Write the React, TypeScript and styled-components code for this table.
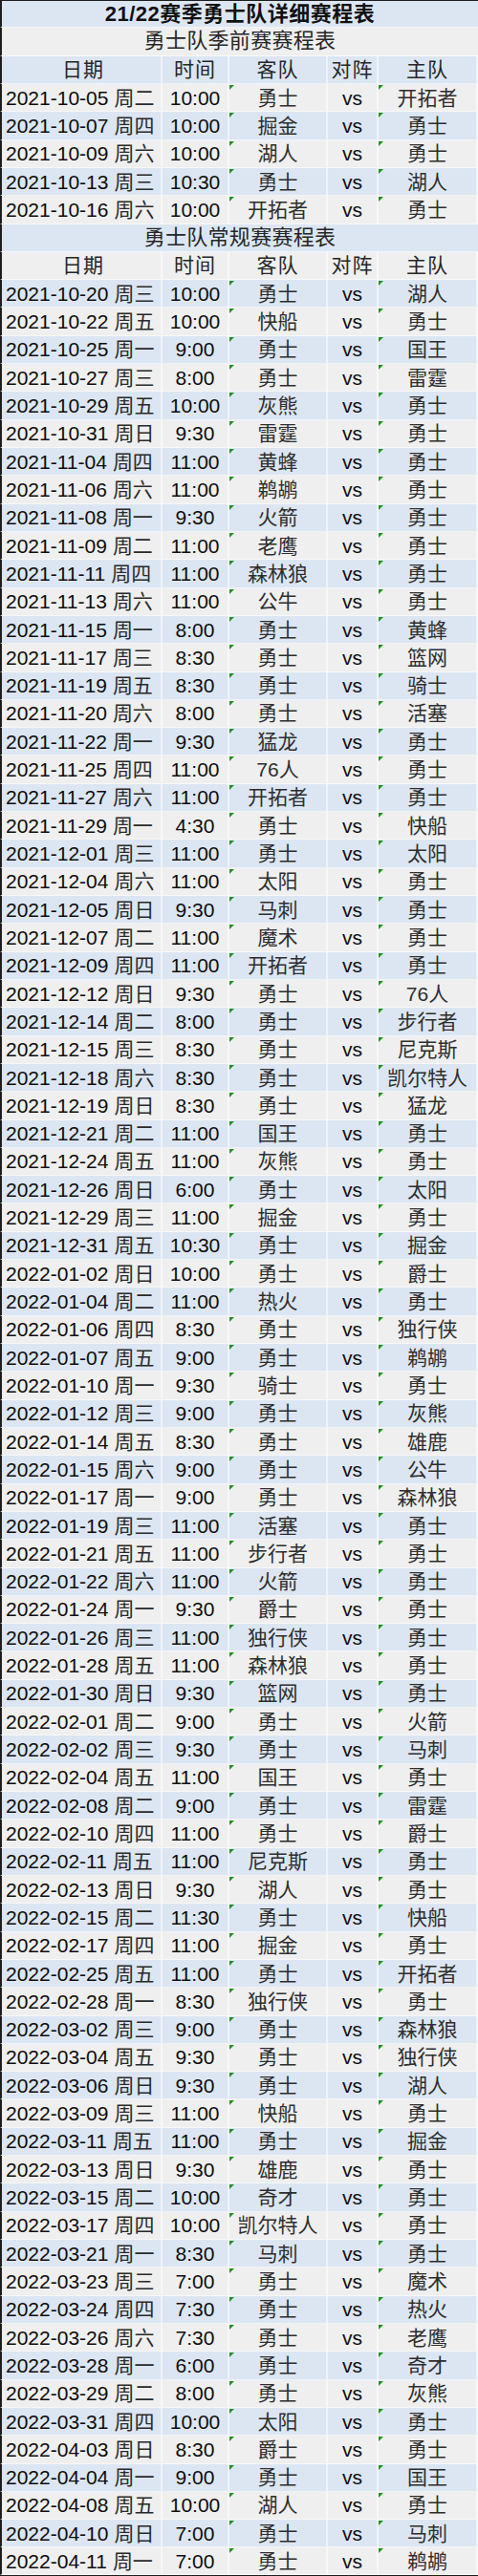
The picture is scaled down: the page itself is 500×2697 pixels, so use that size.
import React from "react";
import styled, { createGlobalStyle } from "styled-components";

const GlobalStyle = createGlobalStyle`
  html, body {
    margin: 0;
    padding: 0;
    background: #ffffff;
  }
  body {
    font-family: "Liberation Sans", "Noto Sans CJK SC", sans-serif;
  }
`;

const ROW_H = "29.315px";
const BLUE = "#dce6f2";
const GRAY = "#efefef";

type Band = "blue" | "gray";

const Sheet = styled.div`
  width: 500px;
  display: flex;
  flex-direction: column;
`;

const Banner = styled.div<{ $band: Band; $title?: boolean }>`
  height: ${ROW_H};
  box-sizing: border-box;
  display: flex;
  align-items: center;
  justify-content: center;
  background: ${({ $band }) => ($band === "blue" ? BLUE : GRAY)};
  border-left: 2px solid #1e1e1e;
  border-top: ${({ $title }) => ($title ? "1px solid #1e1e1e" : "none")};
  border-bottom: 1px solid rgba(255, 255, 255, 0.6);
  font-size: 22px;
  line-height: 1;
  font-weight: ${({ $title }) => ($title ? 700 : 400)};
  color: ${({ $title }) => ($title ? "#111" : "#262626")};
  letter-spacing: ${({ $title }) => ($title ? "0.5px" : "0.3px")};
`;

const Row = styled.div<{ $band: Band; $last?: boolean }>`
  height: ${ROW_H};
  display: grid;
  grid-template-columns: 170px 70px 103px 53px 104px;
  background: ${({ $band }) => ($band === "blue" ? BLUE : GRAY)};
  border-bottom: ${({ $last }) => ($last ? "1px solid #1e1e1e" : "none")};
  box-sizing: border-box;
`;

const Cell = styled.div<{ $left?: boolean; $flag?: boolean; $soft?: boolean }>`
  position: relative;
  display: flex;
  align-items: center;
  justify-content: ${({ $left }) => ($left ? "flex-start" : "center")};
  padding-left: ${({ $left }) => ($left ? "4px" : "0")};
  box-sizing: border-box;
  border-right: 2px solid rgba(255, 255, 255, 0.55);
  border-bottom: 1px solid rgba(255, 255, 255, 0.55);
  border-left: ${({ $left }) => ($left ? "2px solid #1e1e1e" : "none")};
  white-space: nowrap;
  font-size: 21px;
  line-height: 1;
  color: ${({ $soft }) => ($soft ? "#2e2e2e" : "#0d0d0d")};
  overflow: hidden;

  &::before {
    content: "";
    display: ${({ $flag }) => ($flag ? "block" : "none")};
    position: absolute;
    top: 1px;
    left: 0;
    width: 0;
    height: 0;
    border-top: 5px solid #1f931f;
    border-right: 5px solid transparent;
  }
`;

const Weekday = styled.span`
  margin-left: 6px;
  color: #2a2a2a;
`;

const HeadCell = styled(Cell)`
  color: #262626;
  font-size: 21px;
  letter-spacing: 1px;
`;

const preseason = [
  "2021-10-05|周二|10:00|勇士|开拓者",
  "2021-10-07|周四|10:00|掘金|勇士",
  "2021-10-09|周六|10:00|湖人|勇士",
  "2021-10-13|周三|10:30|勇士|湖人",
  "2021-10-16|周六|10:00|开拓者|勇士",
];

const regular = [
  "2021-10-20|周三|10:00|勇士|湖人",
  "2021-10-22|周五|10:00|快船|勇士",
  "2021-10-25|周一|9:00|勇士|国王",
  "2021-10-27|周三|8:00|勇士|雷霆",
  "2021-10-29|周五|10:00|灰熊|勇士",
  "2021-10-31|周日|9:30|雷霆|勇士",
  "2021-11-04|周四|11:00|黄蜂|勇士",
  "2021-11-06|周六|11:00|鹈鹕|勇士",
  "2021-11-08|周一|9:30|火箭|勇士",
  "2021-11-09|周二|11:00|老鹰|勇士",
  "2021-11-11|周四|11:00|森林狼|勇士",
  "2021-11-13|周六|11:00|公牛|勇士",
  "2021-11-15|周一|8:00|勇士|黄蜂",
  "2021-11-17|周三|8:30|勇士|篮网",
  "2021-11-19|周五|8:30|勇士|骑士",
  "2021-11-20|周六|8:00|勇士|活塞",
  "2021-11-22|周一|9:30|猛龙|勇士",
  "2021-11-25|周四|11:00|76人|勇士",
  "2021-11-27|周六|11:00|开拓者|勇士",
  "2021-11-29|周一|4:30|勇士|快船",
  "2021-12-01|周三|11:00|勇士|太阳",
  "2021-12-04|周六|11:00|太阳|勇士",
  "2021-12-05|周日|9:30|马刺|勇士",
  "2021-12-07|周二|11:00|魔术|勇士",
  "2021-12-09|周四|11:00|开拓者|勇士",
  "2021-12-12|周日|9:30|勇士|76人",
  "2021-12-14|周二|8:00|勇士|步行者",
  "2021-12-15|周三|8:30|勇士|尼克斯",
  "2021-12-18|周六|8:30|勇士|凯尔特人",
  "2021-12-19|周日|8:30|勇士|猛龙",
  "2021-12-21|周二|11:00|国王|勇士",
  "2021-12-24|周五|11:00|灰熊|勇士",
  "2021-12-26|周日|6:00|勇士|太阳",
  "2021-12-29|周三|11:00|掘金|勇士",
  "2021-12-31|周五|10:30|勇士|掘金",
  "2022-01-02|周日|10:00|勇士|爵士",
  "2022-01-04|周二|11:00|热火|勇士",
  "2022-01-06|周四|8:30|勇士|独行侠",
  "2022-01-07|周五|9:00|勇士|鹈鹕",
  "2022-01-10|周一|9:30|骑士|勇士",
  "2022-01-12|周三|9:00|勇士|灰熊",
  "2022-01-14|周五|8:30|勇士|雄鹿",
  "2022-01-15|周六|9:00|勇士|公牛",
  "2022-01-17|周一|9:00|勇士|森林狼",
  "2022-01-19|周三|11:00|活塞|勇士",
  "2022-01-21|周五|11:00|步行者|勇士",
  "2022-01-22|周六|11:00|火箭|勇士",
  "2022-01-24|周一|9:30|爵士|勇士",
  "2022-01-26|周三|11:00|独行侠|勇士",
  "2022-01-28|周五|11:00|森林狼|勇士",
  "2022-01-30|周日|9:30|篮网|勇士",
  "2022-02-01|周二|9:00|勇士|火箭",
  "2022-02-02|周三|9:30|勇士|马刺",
  "2022-02-04|周五|11:00|国王|勇士",
  "2022-02-08|周二|9:00|勇士|雷霆",
  "2022-02-10|周四|11:00|勇士|爵士",
  "2022-02-11|周五|11:00|尼克斯|勇士",
  "2022-02-13|周日|9:30|湖人|勇士",
  "2022-02-15|周二|11:30|勇士|快船",
  "2022-02-17|周四|11:00|掘金|勇士",
  "2022-02-25|周五|11:00|勇士|开拓者",
  "2022-02-28|周一|8:30|独行侠|勇士",
  "2022-03-02|周三|9:00|勇士|森林狼",
  "2022-03-04|周五|9:30|勇士|独行侠",
  "2022-03-06|周日|9:30|勇士|湖人",
  "2022-03-09|周三|11:00|快船|勇士",
  "2022-03-11|周五|11:00|勇士|掘金",
  "2022-03-13|周日|9:30|雄鹿|勇士",
  "2022-03-15|周二|10:00|奇才|勇士",
  "2022-03-17|周四|10:00|凯尔特人|勇士",
  "2022-03-21|周一|8:30|马刺|勇士",
  "2022-03-23|周三|7:00|勇士|魔术",
  "2022-03-24|周四|7:30|勇士|热火",
  "2022-03-26|周六|7:30|勇士|老鹰",
  "2022-03-28|周一|6:00|勇士|奇才",
  "2022-03-29|周二|8:00|勇士|灰熊",
  "2022-03-31|周四|10:00|太阳|勇士",
  "2022-04-03|周日|8:30|爵士|勇士",
  "2022-04-04|周一|9:00|勇士|国王",
  "2022-04-08|周五|10:00|湖人|勇士",
  "2022-04-10|周日|7:00|勇士|马刺",
  "2022-04-11|周一|7:00|勇士|鹈鹕",
];

const band = (i: number): Band => (i % 2 === 0 ? "blue" : "gray");

const HeaderRow = ({ index }: { index: number }) => (
  <Row $band={band(index)}>
    <HeadCell $left>
      <span style={{ width: "100%", textAlign: "center" }}>日期</span>
    </HeadCell>
    <HeadCell>时间</HeadCell>
    <HeadCell>客队</HeadCell>
    <HeadCell>对阵</HeadCell>
    <HeadCell>主队</HeadCell>
  </Row>
);

const GameRow = ({ line, index, last }: { line: string; index: number; last?: boolean }) => {
  const [date, day, time, away, home] = line.split("|");
  return (
    <Row $band={band(index)} $last={last}>
      <Cell $left>
        {date}
        <Weekday>{day}</Weekday>
      </Cell>
      <Cell>{time}</Cell>
      <Cell $flag $soft>
        {away}
      </Cell>
      <Cell>vs</Cell>
      <Cell $flag $soft>
        {home}
      </Cell>
    </Row>
  );
};

export default function App() {
  const regStart = 3 + preseason.length;
  return (
    <>
      <GlobalStyle />
      <Sheet>
        <Banner $band={band(0)} $title>
          21/22赛季勇士队详细赛程表
        </Banner>
        <Banner $band={band(1)}>勇士队季前赛赛程表</Banner>
        <HeaderRow index={2} />
        {preseason.map((line, i) => (
          <GameRow key={line} line={line} index={3 + i} />
        ))}
        <Banner $band={band(regStart)}>勇士队常规赛赛程表</Banner>
        <HeaderRow index={regStart + 1} />
        {regular.map((line, i) => (
          <GameRow
            key={line}
            line={line}
            index={regStart + 2 + i}
            last={i === regular.length - 1}
          />
        ))}
      </Sheet>
    </>
  );
}
